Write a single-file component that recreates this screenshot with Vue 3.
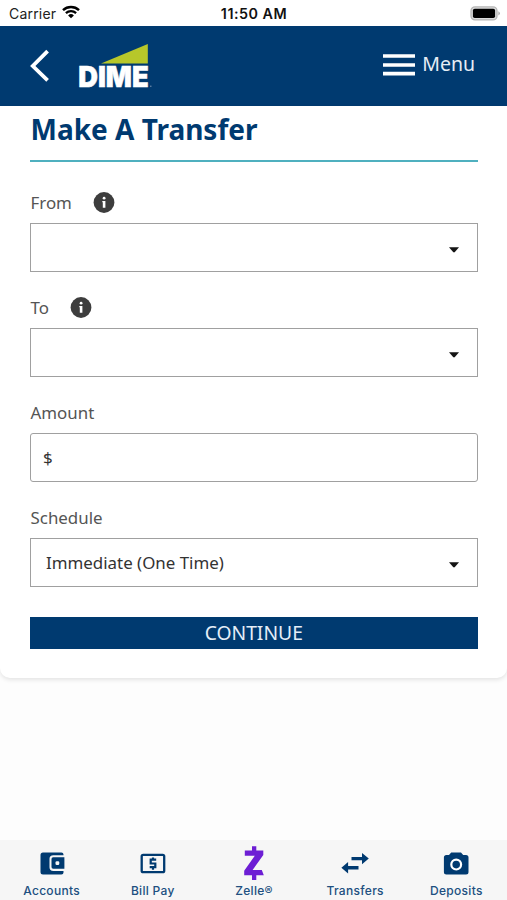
<script setup>
const fields = [
  { label: 'From', info: true, select: true, value: '' },
  { label: 'To', info: true, select: true, value: '' },
  { label: 'Amount', info: false, select: false, value: '$' },
  { label: 'Schedule', info: false, select: true, value: 'Immediate (One Time)' },
]
const tabs = [
  { label: 'Accounts', icon: 'wallet' },
  { label: 'Bill Pay', icon: 'bill' },
  { label: 'Zelle®', icon: 'zelle' },
  { label: 'Transfers', icon: 'swap' },
  { label: 'Deposits', icon: 'camera' },
]
</script>

<template>
  <div class="screen">
    <div class="status">
      <div class="carrier">
        <span>Carrier</span>
        <svg width="18" height="14" viewBox="0 0 18 14">
          <path d="M1 5.1A11.8 11.8 0 0 1 17 5.1" fill="none" stroke="#000" stroke-width="2.5" />
          <path d="M3.9 8.2A7.5 7.5 0 0 1 14.1 8.2" fill="none" stroke="#000" stroke-width="2.3" />
          <path d="M6.1 10.4A4.3 4.3 0 0 1 11.9 10.4L9 13.3Z" fill="#000" />
        </svg>
      </div>
      <span class="time">11:50 AM</span>
      <svg class="battery" width="31" height="15" viewBox="0 0 31 15">
        <rect x="1" y=".9" width="26" height="13" rx="4" fill="#ddd" stroke="#b5b5b5" stroke-width="1.3" />
        <rect x="2.9" y="2.8" width="22.2" height="9.2" rx="1.8" />
        <path d="M28.4 5.2Q31.4 7.4 28.4 9.6Z" fill="#aaa" />
      </svg>
    </div>

    <header class="header">
      <svg class="back" width="20" height="34" viewBox="0 0 20 34">
        <path d="M18.6 2.2 3.8 17 18.6 31.3" fill="none" stroke="#fff" stroke-width="3.8" />
      </svg>
      <svg class="logo" width="80" height="50" viewBox="0 0 80 50">
        <path d="M23 22.5 69.8 3v19.5Z" fill="#b7c72a" />
        <text class="wordmark" x=".2" y="45.5" textLength="70.5" lengthAdjust="spacingAndGlyphs">DIME</text>
        <rect x="72" y="44.7" width="1.5" height="1" fill="#7e98b5" />
      </svg>
      <div class="menu">
        <svg width="32" height="24" viewBox="0 0 32 24">
          <path d="M0 3H32M0 12H32M0 20.7H32" stroke="#fff" stroke-width="3.7" />
        </svg>
        <span>Menu</span>
      </div>
    </header>

    <main class="card">
      <h1 class="title">Make A Transfer</h1>
      <div v-for="f in fields" :key="f.label" class="field">
        <div class="label">
          <span>{{ f.label }}</span>
          <svg v-if="f.info" width="22" height="22" viewBox="0 0 22 22">
            <circle cx="11" cy="10.5" r="10.4" fill="#3d3d3d" />
            <circle cx="11.1" cy="6.2" r="1.4" fill="#fff" />
            <path d="M9.3 8.9h3.1v6.9H9.8V10.2H9.3Z" fill="#fff" />
          </svg>
        </div>
        <div class="box" :class="{ input: !f.select }">
          <span>{{ f.value }}</span>
          <svg v-if="f.select" width="10" height="6" viewBox="0 0 10 6">
            <path d="M0 .3H10L5.9 5Q5 5.9 4.1 5Z" fill="#151515" />
          </svg>
        </div>
      </div>
      <button class="continue">CONTINUE</button>
    </main>

    <nav class="tabs">
      <div v-for="t in tabs" :key="t.label" class="tab">
        <svg width="32" height="36" viewBox="0 0 32 36">
          <g v-if="t.icon === 'wallet'" fill="#003a70">
            <path d="M7 7.4H25.4Q27.5 7.4 27.5 9.5V10.2H17.4Q13.5 10.2 13.5 13.8V22.3Q13.5 25.9 17.4 25.9H27.5V27.4Q27.5 29.5 25.4 29.5H7Q4.5 29.5 4.5 27V9.9Q4.5 7.4 7 7.4Z" />
            <path d="M17.2 12.2H28.4V23.8H17.2Q15.5 23.8 15.5 22V14Q15.5 12.2 17.2 12.2Z" />
            <rect x="19.5" y="16.2" width="3.8" height="3.8" rx="1.3" fill="#f6f6f6" />
          </g>
          <g v-else-if="t.icon === 'bill'">
            <rect x="4.7" y="9.8" width="22.5" height="17.4" rx="1.5" fill="none" stroke="#003a70" stroke-width="2.3" />
            <path d="M19.2 14.7H13.7V18.5H18.3V22.2H12.7M16 12.4V15M16 22V24.7" fill="none" stroke="#003a70" stroke-width="2.2" />
          </g>
          <path v-else-if="t.icon === 'zelle'" d="M6.8 5.5H14V1.3H18.3V5.5H25.3V10L14.6 25H23.8L25.8 30.3H18.3V35H14V30.3H6.2V25.8L16.8 10.8H6.8Z" fill="#6d1ed4" />
          <path v-else-if="t.icon === 'swap'" d="M12.5 11.9H23V8L29.8 13.6 23 19.2V15.3H12.5ZM19.5 21H9.1V17.1L2.4 22.7 9.1 28.4V24.4H19.5Z" fill="#003a70" />
          <g v-else>
            <path d="M11.2 7.6H21L23.2 9.9H26Q28.5 9.9 28.5 12.4V27Q28.5 29.5 26 29.5H6.4Q3.9 29.5 3.9 27V12.4Q3.9 9.9 6.4 9.9H9Z" fill="#003a70" />
            <circle cx="16.2" cy="19.6" r="4.9" fill="none" stroke="#fff" stroke-width="2.2" />
          </g>
        </svg>
        <span>{{ t.label }}</span>
      </div>
    </nav>
  </div>
</template>

<style>
body { background: #fdfdfd; }
</style>

<style scoped>
.screen { height: 900px; display: flex; flex-direction: column; font-family: "Noto Sans", sans-serif; color: #333; overflow: hidden; }
.status { height: 25.5px; flex: none; display: grid; grid-template-columns: 1fr auto 1fr; align-items: center; padding: 1px 6px 0 9px; box-sizing: border-box; font-family: Inter, sans-serif; font-size: 14px; color: #222; background: #fff; }
.carrier { display: flex; align-items: center; gap: 6px; letter-spacing: .2px; }
.carrier svg { margin-top: -2px; }
.time { margin-left: -2px; font-weight: 600; font-size: 14.3px; letter-spacing: .5px; color: #111; }
.battery { justify-self: end; }
.header { height: 80.5px; flex: none; display: flex; align-items: center; padding: 0 32px 0 29px; box-sizing: border-box; background: #003a70; color: #fff; }
.logo { margin-left: 29px; overflow: visible; }
.wordmark { font-family: Inter, sans-serif; font-weight: 900; font-size: 28.5px; fill: #fff; stroke: #fff; stroke-width: .5px; }
.menu { margin-left: auto; display: flex; align-items: center; gap: 7px; font-size: 19.5px; line-height: 26px; color: #e6edf5; }
.menu svg { margin-top: -2px; }
.menu span { margin-top: -3px; }
.card { height: 572px; flex: none; box-sizing: border-box; padding: 0 29.5px 0 30px; background: #fff; border-radius: 0 0 10px 10px; box-shadow: 0 2px 4px rgba(0, 0, 0, .1); }
.title { margin: 0 0 25px; height: 56px; box-sizing: border-box; padding: 6px 0 0 .5px; border-bottom: 2px solid #4fb0bf; font-size: 28px; line-height: 35px; font-weight: 700; color: #003a70; }
.field { height: 105px; }
.label { height: 31px; display: flex; align-items: center; gap: 21px; padding-left: .5px; font-size: 16.9px; line-height: 30px; color: #555; }
.box { margin-top: 5px; height: 49px; box-sizing: border-box; border: 1px solid #a0a0a0; display: flex; align-items: center; justify-content: space-between; padding: 0 18px 0 15px; font-size: 16.9px; color: #333; }
.box svg { margin-top: 5px; }
.input { border-radius: 3px; padding-left: 12px; }
.continue { display: block; width: 100%; height: 32px; margin-top: 9.5px; padding: 0; border: 0; background: #003a70; color: #e4eef8; font-family: inherit; font-size: 19.3px; line-height: 32px; }
.tabs { margin-top: auto; height: 60px; display: grid; grid-template-columns: repeat(5, 1fr); padding: 0 0 0 1px; background: #f6f6f6; }
.tab { display: flex; flex-direction: column; align-items: center; padding-top: 5px; font-family: Inter, sans-serif; font-size: 12px; font-weight: 500; letter-spacing: .3px; line-height: 16px; color: #204f80; }
.tab span { margin-top: 2px; }
</style>
